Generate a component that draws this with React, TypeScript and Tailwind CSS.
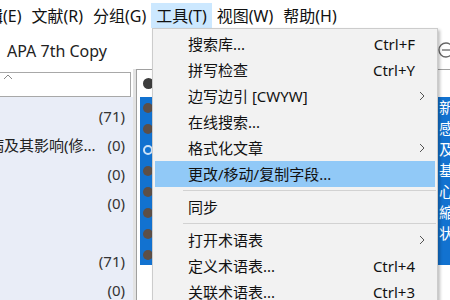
import { ReactNode } from "react";

const menuBar = ["编辑(E)", "文献(R)", "分组(G)", "工具(T)", "视图(W)", "帮助(H)"];

type Item = { t: string; k?: string; sub?: boolean; hl?: boolean } | "sep";

const toolItems: Item[] = [
  { t: "搜索库...", k: "Ctrl+F" },
  { t: "拼写检查", k: "Ctrl+Y" },
  { t: "边写边引 [CWYW]", sub: true },
  { t: "在线搜索..." },
  { t: "格式化文章", sub: true },
  { t: "更改/移动/复制字段...", hl: true },
  "sep",
  { t: "同步" },
  "sep",
  { t: "打开术语表", sub: true },
  { t: "定义术语表...", k: "Ctrl+4" },
  { t: "关联术语表...", k: "Ctrl+3" },
];

const groups = [
  { label: "", n: "(71)" },
  { label: "疾病及其影响(修...", n: "(0)" },
  { label: "", n: "(0)" },
  { label: "", n: "(0)" },
  { label: "", n: "" },
  { label: "", n: "(71)" },
  { label: "", n: "(0)" },
];

const refs = ["新型冠状病毒", "感染后综合征", "及其影响研究", "基于队列分析", "心理健康状况", "縮短住院时间", "状态评估", ""];

function Chevron() {
  return (
    <svg width="6" height="10" viewBox="0 0 6 10" className="absolute right-[10px]">
      <polyline points="1,1 5,5 1,9" fill="none" stroke="#555" strokeWidth="1" />
    </svg>
  );
}

function MenuRow({ children, hl }: { children: ReactNode; hl?: boolean }) {
  return (
    <div
      className={`relative mx-[2px] flex h-[26px] items-center pl-[33px] pr-[20px] ${
        hl ? "bg-[#91c9f7]" : ""
      }`}
    >
      {children}
    </div>
  );
}

export default function App() {
  return (
    <div className="relative h-[300px] w-[450px] overflow-hidden bg-white font-['Noto_Sans','Noto_Sans_CJK_SC',sans-serif] text-[15px] leading-none text-[#111]">
      {/* menu bar */}
      <div className="-ml-[34px] flex h-[28px] text-[16px]">
        {menuBar.map((m) => (
          <div
            key={m}
            className={`mt-[3px] flex h-[25px] items-center px-[5px] whitespace-nowrap ${
              m === "工具(T)" ? "bg-[#cce8ff]" : ""
            }`}
          >
            {m}
          </div>
        ))}
      </div>

      {/* toolbar */}
      <div className="flex h-[41px] items-center justify-between">
        <span className="ml-[7px] mt-[4px] text-[16px] text-[#222]">APA 7th Copy</span>
        <svg width="24" height="24" viewBox="0 0 24 24" className="-mr-[7px] mt-[2px]">
          <circle cx="13" cy="12" r="7" fill="none" stroke="#666" strokeWidth="1.3" />
          <line x1="9" y1="12" x2="17" y2="12" stroke="#666" strokeWidth="1.3" />
          <line x1="18" y1="17" x2="24" y2="23" stroke="#666" strokeWidth="1.5" />
        </svg>
      </div>

      {/* content */}
      <div className="flex h-[231px]">
        <div className="flex w-[133px] flex-col overflow-hidden">
          <div className="bg-white pt-[3px]">
            <div className="-ml-px h-[25px] w-[132px] border border-[#a8a8a8] bg-white">
              <svg width="10" height="6" viewBox="0 0 10 6" className="ml-[3px] mt-[1px]">
                <polyline points="1,5 5,1 9,5" fill="none" stroke="#888" strokeWidth="1" />
              </svg>
            </div>
          </div>
          <div className="flex-1 overflow-hidden bg-[#e9edf7] pt-[5px]">
            {groups.map((g, i) => (
              <div key={i} className="flex h-[29px] items-center pr-[8px]">
                <span className="-ml-[26px] whitespace-nowrap text-[#222]">{g.label}</span>
                <span className="ml-auto text-[#333]">{g.n}</span>
              </div>
            ))}
          </div>
        </div>
        <div className="w-[3px] bg-[#e3e3e3]" />
        <div className="flex-1 overflow-hidden border-l border-t border-[#a0a0a0] pl-[3px]">
          <div className="flex h-[27px] items-center">
            <div className="ml-[3px] h-[11px] w-[11px] rounded-full bg-[#3c3c3c]" />
          </div>
          {refs.map((r, i) => (
            <div key={i} className="flex h-[21px] items-center bg-[#1272d0]">
              <div className="flex w-[299px] shrink-0 items-center">
                {i === 2 ? (
                  <div className="ml-[3px] h-[10px] w-[10px] rounded-full border-2 border-[#cfe3f7]" />
                ) : (
                  <div className="ml-[3px] h-[10px] w-[10px] rounded-full bg-[#5d4f47]" />
                )}
              </div>
              <span className="whitespace-nowrap text-white">{r}</span>
            </div>
          ))}
        </div>
      </div>

      {/* tools dropdown */}
      <div className="absolute left-[152px] top-[28px] h-[290px] w-[286px] border border-[#cccccc] bg-[#f2f2f2] pt-[2px] shadow-[2px_2px_3px_rgba(0,0,0,0.25)]">
        {toolItems.map((it, i) =>
          it === "sep" ? (
            <div key={i} className="flex h-[7px] items-center pl-[30px] pr-[1px]">
              <div className="h-px w-full bg-[#d2d2d2]" />
            </div>
          ) : (
            <MenuRow key={i} hl={it.hl}>
              <span className="whitespace-nowrap">{it.t}</span>
              {it.k && <span className="ml-auto">{it.k}</span>}
              {it.sub && <Chevron />}
            </MenuRow>
          )
        )}
      </div>
    </div>
  );
}
